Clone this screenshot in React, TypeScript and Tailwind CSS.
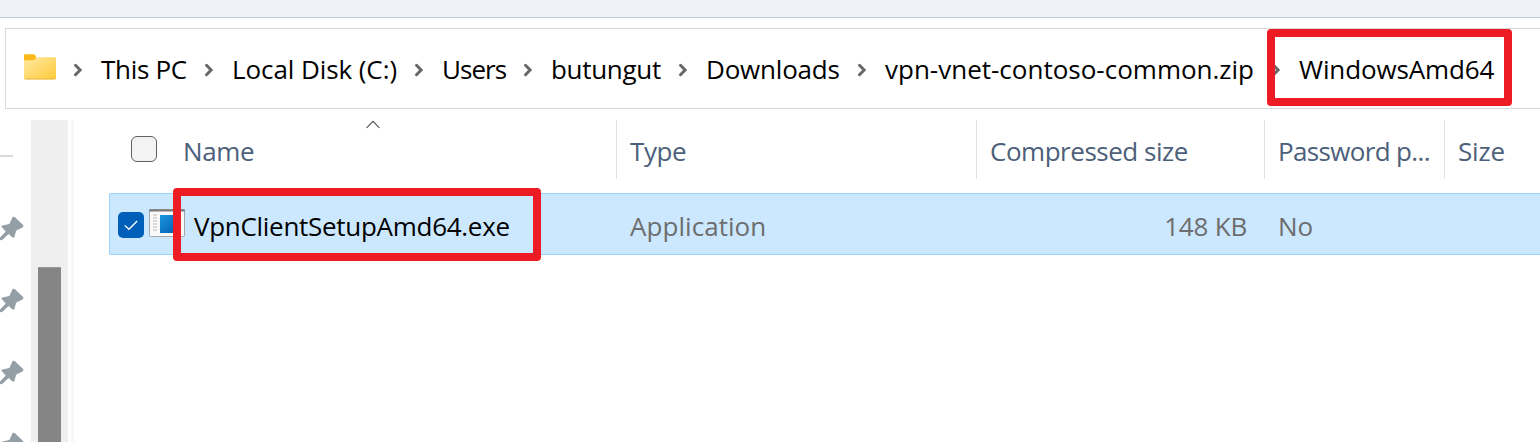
import React from "react";

const crumbs = [
  { label: "This PC", cls: "w-[104px] tracking-[-0.3px]" },
  { label: "Local Disk (C:)", cls: "w-[183px] tracking-[-0.08px]" },
  { label: "Users", cls: "w-[82px] tracking-[-0.95px]" },
  { label: "butungut", cls: "w-[128px] tracking-[-0.3px]" },
  { label: "Downloads", cls: "w-[152px] tracking-[-0.2px]" },
  { label: "vpn-vnet-contoso-common.zip", cls: "w-[387px] tracking-[0px]" },
  { label: "WindowsAmd64", cls: "tracking-[-0.12px]" },
];

function FolderIcon() {
  return (
    <svg className="ml-[18px] mt-[25px] h-[26px] w-8 shrink-0" viewBox="0 0 32 26">
      <defs>
        <linearGradient id="folder" x1="0" y1="0" x2="1" y2="1">
          <stop offset="0" stopColor="#ffe9a2" />
          <stop offset="1" stopColor="#ffca3b" />
        </linearGradient>
      </defs>
      <path d="M0 9V1.5Q0 .3 1.3 .3H9.5Q10.8 .3 11.4 1.6L12.2 3.3V9Z" fill="#fbb917" />
      <path d="M0 6.2H9.3Q10.4 6.2 11 5.2L11.6 4.2Q12.1 3.3 13.3 3.3H30.8Q32 3.3 32 4.5V24Q32 25.2 30.8 25.2H1.2Q0 25.2 0 24Z" fill="url(#folder)" />
      <path d="M.3 24.4Q.6 25 1.4 25H30.6Q31.4 25 31.7 24.4" fill="none" stroke="#e8b233" strokeWidth=".9" />
    </svg>
  );
}

function Chevron() {
  return (
    <svg className="mt-[34px] h-[14px] w-[10px] shrink-0" viewBox="0 0 10 14">
      <path d="M2.5 2.3L7.1 7L2.5 11.7" fill="none" stroke="#686868" strokeWidth="3" strokeLinecap="round" strokeLinejoin="miter" />
    </svg>
  );
}

function Pin() {
  return (
    <svg className="h-[26px] w-6 shrink-0" viewBox="0 0 24 26">
      <path
        d="M12.6 1Q13.8 .2 15 1.3L22.6 8.4Q24.2 10.3 22.4 11.5L16.2 14.5L14.4 21Q13.8 22.3 12.7 21.4L8.6 18L2.4 23.7Q.8 24.8 0 23.8V21.6L5.8 15.6L2 11.6Q.8 10 2.6 9.6L9.4 8Z"
        fill="#949fa5"
      />
    </svg>
  );
}

function AppIcon() {
  return (
    <svg className="ml-[5px] mt-[15px] h-7 w-9 shrink-0" viewBox="0 0 36 28">
      <defs>
        <linearGradient id="pane" x1="0" y1="0" x2="1" y2="1">
          <stop offset="0" stopColor="#1a96df" />
          <stop offset="1" stopColor="#0358ad" />
        </linearGradient>
      </defs>
      <rect x=".5" y=".5" width="35" height="27" rx="1" fill="#f9f9f9" stroke="#a6a6a6" />
      <path d="M.3 1.4H35.7" stroke="#7a7a7a" strokeWidth="2.4" />
      <path d="M4 6h4M4 9h4M4 12h4M4 15h4M4 18h4M4 21h4" stroke="#d0d0d0" strokeWidth="1.7" />
      <rect x="11" y="6" width="21" height="18" fill="url(#pane)" />
    </svg>
  );
}

const headCell = "h-[59px] shrink-0 whitespace-nowrap border-l border-[#e2e2e2] pl-[13px] leading-[62px]";

export default function App() {
  return (
    <div className="relative flex h-[442px] w-[1540px] flex-col overflow-hidden bg-white font-['Open_Sans','Noto_Sans',sans-serif] text-[26px] font-[370] text-black">
      <div className="h-[18px] shrink-0 border-b border-[#bdcad8] bg-[#eff3f8]" />

      <div className="ml-[5px] mt-[10px] flex h-[81px] shrink-0 border-y border-l border-[#d9d9d9]">
        <FolderIcon />
        <div className="ml-[17px] flex">
          {crumbs.map((c) => (
            <div key={c.label} className="flex">
              <Chevron />
              <span className={"ml-[17px] whitespace-nowrap pl-px leading-[80px] " + c.cls}>{c.label}</span>
            </div>
          ))}
        </div>
      </div>

      <div className="mt-[11px] flex h-[322px] shrink-0">
        <div className="flex w-[31px] shrink-0 flex-col overflow-hidden">
          <div className="mt-[35px] h-[2px] w-[13px] shrink-0 bg-[#d9d9d9]" />
          <div className="mt-[59px] flex flex-col gap-[46px]">
            <Pin />
            <Pin />
            <Pin />
            <Pin />
          </div>
        </div>
        <div className="flex w-[37px] shrink-0 flex-col items-start bg-[#efefef] pl-[7px] pt-[147px]">
          <div className="w-[23px] grow border-t border-[#999999] bg-[#858585]" />
        </div>
        <div className="ml-[3px] w-[3px] shrink-0 bg-[#f7f7f7]" />

        <div className="flex min-w-0 grow flex-col pl-[35px]">
          <div className="flex h-[59px] shrink-0 text-[#4c607a]">
            <div className="flex w-[507px] shrink-0">
              <div className="ml-[22px] mt-4 size-[26px] shrink-0 rounded-[6px] border border-[#606060] bg-[#f3f3f3]" />
              <span className="ml-[26px] w-[183px] leading-[62px] tracking-[-0.4px]">Name</span>
              <svg className="h-[9px] w-[14px]" viewBox="0 0 14 9">
                <path d="M.6 7.8L7 1.4L13.4 7.8" fill="none" stroke="#505050" strokeWidth="1.1" />
              </svg>
            </div>
            <div className={headCell + " w-[360px] tracking-[-0.4px]"}>Type</div>
            <div className={headCell + " w-[288px] tracking-[-0.47px]"}>Compressed size</div>
            <div className={headCell + " w-[180px] tracking-[-0.65px]"}>Password p...</div>
            <div className={headCell + " tracking-[-0.2px]"}>Size</div>
          </div>

          <div className="mt-[14px] flex h-[62px] shrink-0 rounded-l-[2px] border-y border-l border-[#99d1ff] bg-[#cce8ff] leading-[64px] text-[#6d6d6d]">
            <div className="flex w-[520px] shrink-0 text-black">
              <div className="ml-2 mt-[18px] flex size-[26px] shrink-0 items-center justify-center rounded-[5px] bg-[#005fb8]">
                <svg className="size-[14px]" viewBox="0 0 14 14">
                  <path d="M.8 7.4L4.9 11.3L13.2 3" fill="none" stroke="#ffffff" strokeWidth="1.3" />
                </svg>
              </div>
              <AppIcon />
              <span className="ml-[9px] tracking-[-0.29px]">VpnClientSetupAmd64.exe</span>
            </div>
            <span className="w-[360px] shrink-0 tracking-[0.05px]">Application</span>
            <span className="w-[257px] shrink-0 text-right tracking-[-0.2px]">148 KB</span>
            <span className="ml-[31px] tracking-[-0.2px]">No</span>
          </div>
        </div>
      </div>

      <div className="absolute left-[1267px] top-[29px] h-[77px] w-[245px] rounded-[4px] border-8 border-[#ed1c24]" />
      <div className="absolute left-[173px] top-[188px] h-[73px] w-[368px] rounded-[4px] border-8 border-[#ed1c24]" />
    </div>
  );
}
